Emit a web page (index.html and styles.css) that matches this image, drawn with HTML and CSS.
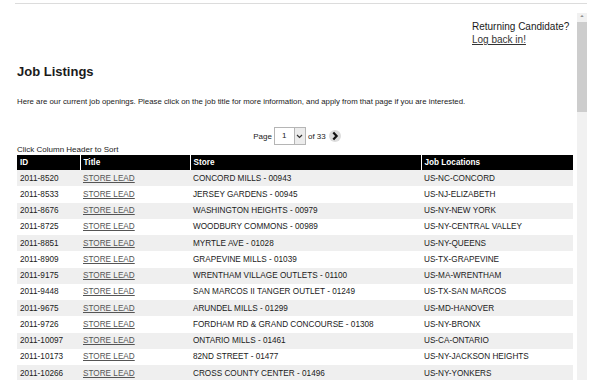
FILE: index.html
```html
<!DOCTYPE html>
<html lang="en">
<head>
    <meta charset="UTF-8">
    <title>Job Listings</title>
    <link rel="stylesheet" href="styles.css">
</head>
<body>
<div class="topline"></div>
<div class="page">
    <div class="content">
        <div class="login">
            <div>Returning Candidate?</div>
            <a href="#">Log back in!</a>
        </div>
        <h1>Job Listings</h1>
        <p class="intro">Here are our current job openings. Please click on the job title for more information, and apply from that page if you are interested.</p>
        <div class="pager">
            <span>Page</span>
            <div class="select">
                <span class="val">1</span>
                <span class="btn">
                    <svg width="7" height="5" viewBox="0 0 7 5"><path d="M1 1 L3.5 3.5 L6 1" fill="none" stroke="#333" stroke-width="1.2"/></svg>
                </span>
            </div>
            <span>of 33</span>
            <svg class="next" width="12" height="12" viewBox="0 0 12 12">
                <circle cx="6" cy="6" r="6" fill="#dcdcdc"/>
                <path d="M4.3 2.6 L7.6 6 L4.3 9.4" fill="none" stroke="#111" stroke-width="2.2"/>
            </svg>
        </div>
        <div class="hint">Click Column Header to Sort</div>
        <table class="jobs">
            <colgroup>
                <col class="c-id">
                <col class="c-title">
                <col class="c-store">
                <col class="c-loc">
            </colgroup>
            <thead>
            <tr><th>ID</th><th>Title</th><th>Store</th><th>Job Locations</th></tr>
            </thead>
            <tbody>
            <tr><td>2011-8520</td><td><a href="#">STORE LEAD</a></td><td>CONCORD MILLS - 00943</td><td>US-NC-CONCORD</td></tr>
            <tr><td>2011-8533</td><td><a href="#">STORE LEAD</a></td><td>JERSEY GARDENS - 00945</td><td>US-NJ-ELIZABETH</td></tr>
            <tr><td>2011-8676</td><td><a href="#">STORE LEAD</a></td><td>WASHINGTON HEIGHTS - 00979</td><td>US-NY-NEW YORK</td></tr>
            <tr><td>2011-8725</td><td><a href="#">STORE LEAD</a></td><td>WOODBURY COMMONS - 00989</td><td>US-NY-CENTRAL VALLEY</td></tr>
            <tr><td>2011-8851</td><td><a href="#">STORE LEAD</a></td><td>MYRTLE AVE - 01028</td><td>US-NY-QUEENS</td></tr>
            <tr><td>2011-8909</td><td><a href="#">STORE LEAD</a></td><td>GRAPEVINE MILLS - 01039</td><td>US-TX-GRAPEVINE</td></tr>
            <tr><td>2011-9175</td><td><a href="#">STORE LEAD</a></td><td>WRENTHAM VILLAGE OUTLETS - 01100</td><td>US-MA-WRENTHAM</td></tr>
            <tr><td>2011-9448</td><td><a href="#">STORE LEAD</a></td><td>SAN MARCOS II TANGER OUTLET - 01249</td><td>US-TX-SAN MARCOS</td></tr>
            <tr><td>2011-9675</td><td><a href="#">STORE LEAD</a></td><td>ARUNDEL MILLS - 01299</td><td>US-MD-HANOVER</td></tr>
            <tr><td>2011-9726</td><td><a href="#">STORE LEAD</a></td><td>FORDHAM RD &amp; GRAND CONCOURSE - 01308</td><td>US-NY-BRONX</td></tr>
            <tr><td>2011-10097</td><td><a href="#">STORE LEAD</a></td><td>ONTARIO MILLS - 01461</td><td>US-CA-ONTARIO</td></tr>
            <tr><td>2011-10173</td><td><a href="#">STORE LEAD</a></td><td>82ND STREET - 01477</td><td>US-NY-JACKSON HEIGHTS</td></tr>
            <tr><td>2011-10266</td><td><a href="#">STORE LEAD</a></td><td>CROSS COUNTY CENTER - 01496</td><td>US-NY-YONKERS</td></tr>
            </tbody>
        </table>
    </div>
    <div class="scrollbar">
        <div class="arrow">&#710;</div>
        <div class="thumb"></div>
    </div>
</div>
</body>
</html>
```

FILE: styles.css
```css
html, body {
    margin: 0;
    padding: 0;
    height: 380px;
    overflow: hidden;
    background: #fff;
}

body {
    font-family: "Liberation Sans", Arial, sans-serif;
    color: #1a1a1a;
}

a {
    color: #555;
    text-decoration: underline;
}

.topline {
    height: 1px;
    background: #dcdcdc;
    margin: 3px 13px 0 15px;
}

.page {
    display: flex;
    height: 376px;
}

.content {
    width: 560px;
    padding-left: 17px;
}

.login {
    width: 100px;
    margin: 16px 0 0 455px;
    font-size: 10px;
    line-height: 13px;
}

.login a {
    color: #333;
}

h1 {
    margin: 18px 0 0;
    font-size: 13px;
    line-height: 15px;
    font-weight: bold;
}

.intro {
    margin: 18px 0 0;
    font-size: 7.8px;
    line-height: 9px;
}

.pager {
    display: flex;
    align-items: center;
    justify-content: center;
    gap: 2px;
    margin: 21px 0 0;
    font-size: 8px;
    height: 18px;
}

.select {
    display: flex;
    height: 16px;
    width: 30px;
    border: 1px solid #b5b5b5;
    background: #fff;
}

.select .val {
    flex: 1;
    line-height: 16px;
    padding-left: 7px;
}

.select .btn {
    width: 10px;
    border-left: 1px solid #b5b5b5;
    background: #ececec;
    display: flex;
    align-items: center;
    justify-content: center;
}

.next {
    margin-left: 1px;
}

.hint {
    margin-top: 0;
    font-size: 8px;
    line-height: 10px;
}

.jobs {
    width: 556px;
    table-layout: fixed;
    border-collapse: collapse;
    font-size: 8.2px;
}

.c-id { width: 63px; }
.c-title { width: 110px; }
.c-store { width: 231px; }
.c-loc { width: 152px; }

.jobs th {
    background: #000;
    color: #fff;
    text-align: left;
    font-weight: bold;
    height: 15px;
    padding: 0 0 0 3px;
    border-left: 1px solid #fff;
}

.jobs th:first-child {
    border-left: 0;
}

.jobs td {
    height: 16.25px;
    padding: 0 0 0 3px;
    white-space: nowrap;
    overflow: hidden;
}

.jobs tbody tr:nth-child(odd) {
    background: #efefef;
}

.scrollbar {
    width: 10px;
    margin: 9px 0 0 0;
    background: #f1f1f1;
}

.scrollbar .arrow {
    height: 9px;
    font-size: 9px;
    line-height: 12px;
    text-align: center;
    color: #505050;
}

.thumb {
    height: 90px;
    background: #cdcdcd;
}
```
